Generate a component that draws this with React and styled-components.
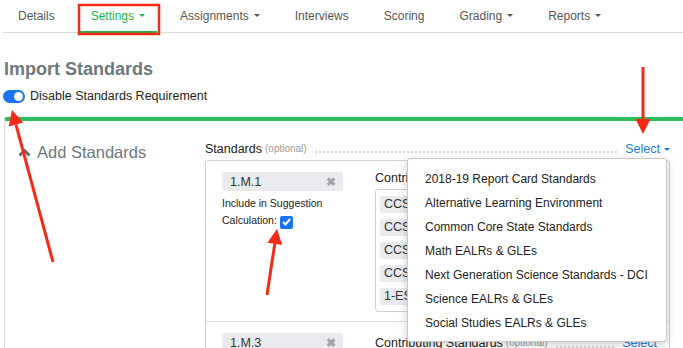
import React from "react";
import styled, { createGlobalStyle } from "styled-components";

const Global = createGlobalStyle`
  body {
    margin: 0;
    background: #fff;
    font-family: "Liberation Sans", Arial, sans-serif;
    color: #333;
    overflow: hidden;
  }
`;

const Page = styled.div`
  position: relative;
  width: 683px;
  height: 348px;
  overflow: hidden;
`;

const Nav = styled.div`
  display: flex;
  height: 32px;
  margin-left: 3px;
  border-bottom: 1px solid #dcdcdc;
`;

const Tab = styled.div`
  display: flex;
  align-items: center;
  gap: 5px;
  padding: 0 12px;
  margin: 0 6px;
  font-size: 12px;
  white-space: nowrap;
  color: ${(p) => (p.active ? "#22b14c" : "#555")};
  border-bottom: 2px solid ${(p) => (p.active ? "#22b14c" : "transparent")};
  margin-bottom: -1px;
  &:first-child {
    margin-left: 3px;
  }
  &:not(:first-child) {
    margin-right: 5px;
  }
`;

const Caret = styled.span`
  width: 0;
  height: 0;
  border-left: 3px solid transparent;
  border-right: 3px solid transparent;
  border-top: 3px solid currentColor;
`;

const Body = styled.div`
  padding-left: 4px;
`;

const Heading = styled.h2`
  margin: 26px 0 0;
  font-size: 18px;
  font-weight: bold;
  color: #6d787d;
  line-height: 20px;
`;

const ToggleRow = styled.label`
  display: flex;
  align-items: center;
  gap: 5px;
  margin: 10px 0 0 -1px;
  font-size: 12.5px;
  color: #222;
`;

const Toggle = styled.span`
  position: relative;
  width: 22px;
  height: 13px;
  border-radius: 7px;
  background: #1a73f0;
  &::after {
    content: "";
    position: absolute;
    right: 2px;
    top: 2px;
    width: 9px;
    height: 9px;
    border-radius: 50%;
    background: #fff;
  }
`;

const Card = styled.div`
  display: grid;
  grid-template-columns: 200px 465px;
  margin-top: 14px;
  border-top: 4px solid #2ebd5d;
  border-left: 1px solid #dcdcdc;
  border-top-left-radius: 3px;
  height: 240px;
`;

const Side = styled.div`
  display: flex;
  align-items: center;
  gap: 6px;
  padding: 22px 0 0 13px;
  align-self: start;
  font-size: 16.5px;
  color: #6d787d;
`;

const Main = styled.div`
  position: relative;
  padding-top: 20px;
`;

const FieldHead = styled.div`
  display: flex;
  align-items: ${(p) => (p.center ? "center" : "flex-end")};
  align-self: start;
  height: ${(p) => (p.center ? "19px" : "auto")};
  font-size: 12.5px;
  color: #222;
  line-height: 16px;
  white-space: nowrap;
`;

const Optional = styled.span`
  font-size: 10px;
  color: #999;
  margin-left: 3px;
`;

const Dots = styled.span`
  flex: 1;
  border-bottom: 2px dotted #d6d6d6;
  margin: 0 8px 4px;
  align-self: flex-end;
`;

const SelectLink = styled.span`
  display: flex;
  align-items: center;
  gap: 4px;
  color: #1a7ae6;
  font-size: 12.5px;
`;

const Box = styled.div`
  margin-top: 3px;
  border: 1px solid #d0d0d0;
  border-radius: 3px;
`;

const Row = styled.div`
  box-sizing: border-box;
  display: grid;
  grid-template-columns: 153px 1fr;
  padding: 11px 12px 11px 16px;
  height: ${(p) => p.h}px;
  border-bottom: ${(p) => (p.last ? "none" : "1px solid #dcdcdc")};
`;

const Tag = styled.div`
  display: flex;
  align-items: center;
  justify-content: space-between;
  width: 121px;
  height: 19px;
  box-sizing: border-box;
  padding: 0 7px 0 8px;
  background: #e8eaed;
  border-radius: 3px;
  font-size: 12.5px;
  color: #333;
`;

const Remove = styled.span`
  font-size: 12px;
  font-weight: bold;
  color: #a4a4a4;
`;

const Include = styled.div`
  margin-top: 4px;
  font-size: 10.5px;
  line-height: 17px;
  color: #222;
`;

const Check = styled.span`
  display: inline-flex;
  align-items: center;
  justify-content: center;
  width: 13px;
  height: 13px;
  margin-left: 3px;
  border-radius: 2px;
  background: #1a73f0;
  vertical-align: -2px;
`;

const ContribLabel = styled.div`
  font-size: 12.5px;
  line-height: 15px;
  color: #222;
  margin-top: -1px;
`;

const ContribBox = styled.div`
  display: flex;
  flex-direction: column;
  gap: 6px;
  margin-top: 3px;
  padding: 6px 4px;
  border: 1px solid #cfcfcf;
  border-radius: 3px;
`;

const ContribTag = styled.div`
  height: 17px;
  line-height: 17px;
  padding-left: 4px;
  background: #e8eaed;
  border-radius: 3px;
  font-size: 12.5px;
  color: #333;
  white-space: nowrap;
  overflow: hidden;
`;

const Menu = styled.ul`
  position: absolute;
  top: 37px;
  right: 3px;
  width: 258px;
  margin: 0;
  padding: 8px 0 6px;
  list-style: none;
  background: #fff;
  border: 1px solid #c9c9c9;
  border-radius: 3px;
  box-shadow: 0 3px 10px rgba(0, 0, 0, 0.18);
`;

const MenuItem = styled.li`
  padding: 0 17px;
  height: 24px;
  line-height: 24px;
  font-size: 12px;
  color: #222;
  white-space: nowrap;
`;

const Overlay = styled.svg`
  position: absolute;
  left: 0;
  top: 0;
  pointer-events: none;
`;

const menu = [
  "2018-19 Report Card Standards",
  "Alternative Learning Environment",
  "Common Core State Standards",
  "Math EALRs & GLEs",
  "Next Generation Science Standards - DCI",
  "Science EALRs & GLEs",
  "Social Studies EALRs & GLEs",
];

const contrib = ["CCSS.MATH.1.OA.A.1", "CCSS.MATH.1.OA.A.2", "CCSS.MATH.1.OA.B.3", "CCSS.MATH.1.OA.B.4", "1-ESS1-1"];

const Arrow = ({ x1, y1, x2, y2 }) => {
  const a = Math.atan2(y2 - y1, x2 - x1);
  const len = 15;
  const w = 7.5;
  const bx = x2 - len * Math.cos(a);
  const by = y2 - len * Math.sin(a);
  const px = -Math.sin(a) * w;
  const py = Math.cos(a) * w;
  return (
    <g>
      <line x1={x1} y1={y1} x2={bx} y2={by} stroke="#f42a16" strokeWidth="3" />
      <polygon
        points={`${x2},${y2} ${bx + px},${by + py} ${bx - px},${by - py}`}
        fill="#f42a16"
      />
    </g>
  );
};

export default function App() {
  return (
    <Page>
      <Global />
      <Nav>
        <Tab>Details</Tab>
        <Tab active>
          Settings <Caret />
        </Tab>
        <Tab>
          Assignments <Caret />
        </Tab>
        <Tab>Interviews</Tab>
        <Tab>Scoring</Tab>
        <Tab>
          Grading <Caret />
        </Tab>
        <Tab>
          Reports <Caret />
        </Tab>
      </Nav>
      <Body>
        <Heading>Import Standards</Heading>
        <ToggleRow>
          <Toggle />
          Disable Standards Requirement
        </ToggleRow>
        <Card>
          <Side>
            <svg width="13" height="9" viewBox="0 0 13 9">
              <path d="M1.5 7.5 L6.5 2.5 L11.5 7.5" fill="none" stroke="#5f6a6f" strokeWidth="3" />
            </svg>
            Add Standards
          </Side>
          <Main>
            <FieldHead>
              Standards<Optional>(optional)</Optional>
              <Dots />
              <SelectLink>
                Select <Caret />
              </SelectLink>
            </FieldHead>
            <Box>
              <Row h={161}>
                <div>
                  <Tag>
                    1.M.1 <Remove>✖</Remove>
                  </Tag>
                  <Include>
                    Include in Suggestion
                    <br />
                    Calculation:
                    <Check>
                      <svg width="9" height="8" viewBox="0 0 9 8">
                        <path d="M1 4 L3.5 6.5 L8 1" fill="none" stroke="#fff" strokeWidth="2" />
                      </svg>
                    </Check>
                  </Include>
                </div>
                <div>
                  <ContribLabel>Contributing Standards</ContribLabel>
                  <ContribBox>
                    {contrib.map((c) => (
                      <ContribTag key={c}>{c}</ContribTag>
                    ))}
                  </ContribBox>
                </div>
              </Row>
              <Row h={60} last>
                <div>
                  <Tag>
                    1.M.3 <Remove>✖</Remove>
                  </Tag>
                </div>
                <FieldHead center>
                  Contributing Standards<Optional>(optional)</Optional>
                  <Dots />
                  <SelectLink>Select</SelectLink>
                </FieldHead>
              </Row>
            </Box>
            <Menu>
              {menu.map((m) => (
                <MenuItem key={m}>{m}</MenuItem>
              ))}
            </Menu>
          </Main>
        </Card>
      </Body>
      <Overlay width="683" height="348">
        <rect x="79" y="5" width="80" height="29" fill="none" stroke="#f42a16" strokeWidth="2.5" />
        <Arrow x1={53} y1={262} x2={12} y2={110} />
        <Arrow x1={267} y1={295} x2={277} y2={229} />
        <Arrow x1={643} y1={67} x2={643} y2={134} />
      </Overlay>
    </Page>
  );
}
